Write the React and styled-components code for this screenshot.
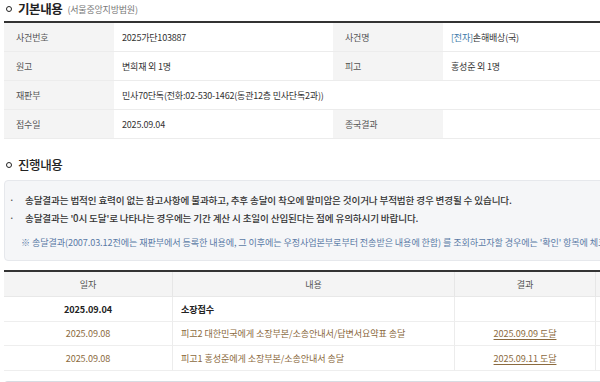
import React from "react";
import styled, { createGlobalStyle } from "styled-components";

const GlobalStyle = createGlobalStyle`
  html, body {
    margin: 0;
    padding: 0;
    width: 600px;
    height: 382px;
    overflow: hidden;
    background: #fff;
  }
  body {
    font-family: "Noto Sans CJK KR", "Noto Sans", sans-serif;
    color: #333;
  }
`;

const Page = styled.div`
  margin-left: 4px;
  width: 658px;
`;

const Title = styled.div`
  display: flex;
  align-items: center;
  height: 17px;
  margin-top: ${(p) => p.$top || 0}px;
  margin-bottom: ${(p) => p.$bottom || 4}px;
  white-space: nowrap;
`;

const Ring = styled.span`
  width: 4px;
  height: 4px;
  border: 1.6px solid #222;
  border-radius: 50%;
  margin-left: 2px;
  margin-right: 6px;
`;

const TitleText = styled.span`
  font-size: 12.5px;
  font-weight: ${(p) => p.$weight || 700};
  color: #222;
  letter-spacing: -0.4px;
`;

const Court = styled.span`
  font-size: 9px;
  color: #777;
  margin-left: 5px;
  margin-top: 2px;
  letter-spacing: -0.2px;
`;

const InfoGrid = styled.div`
  display: grid;
  grid-template-columns: 110px 219px 110px 1fr;
  border-top: 2px solid #333;
  font-size: 9px;
  letter-spacing: -0.2px;
`;

const Cell = styled.div`
  height: 28px;
  display: flex;
  align-items: center;
  border-bottom: 1px solid #ececec;
  white-space: nowrap;
  grid-column: ${(p) => (p.$span ? `span ${p.$span}` : "auto")};
`;

const Label = styled(Cell)`
  background: #f4f4f4;
  color: #555;
  padding-left: 12px;
`;

const Value = styled(Cell)`
  color: #333;
  padding-left: 8px;
`;

const Tag = styled.span`
  color: #3b78a8;
`;

const Notice = styled.div`
  background: #f5f6f8;
  border: 1px solid #e6e8ec;
  border-radius: 4px;
  padding: 10px 0 11px 0;
  white-space: nowrap;
  overflow: hidden;
`;

const Bullet = styled.div`
  display: flex;
  height: 18px;
  align-items: center;
  font-size: 9.6px;
  font-weight: 500;
  color: #333;
  letter-spacing: -0.15px;
`;

const Dot = styled.span`
  width: 20px;
  padding-left: 4px;
  box-sizing: border-box;
  color: #555;
`;

const Note = styled.div`
  height: 14px;
  line-height: 14px;
  margin-top: 8px;
  padding-left: 16px;
  font-size: 9.1px;
  color: #5a7aa6;
  letter-spacing: -0.1px;
`;

const History = styled.div`
  margin-top: 9px;
  border-top: 2px solid #333;
  display: grid;
  grid-template-columns: 168px 282px 141px 1fr;
  font-size: 9.1px;
  letter-spacing: -0.1px;
`;

const HCell = styled.div`
  height: 24px;
  display: flex;
  align-items: center;
  justify-content: center;
  background: #f4f4f4;
  color: #555;
  border-bottom: 1px solid #e8e8e8;
  border-left: ${(p) => (p.$first ? "none" : "1px solid #e6e6e6")};
`;

const RCell = styled.div`
  height: 23.5px;
  display: flex;
  align-items: center;
  justify-content: ${(p) => (p.$left ? "flex-start" : "center")};
  padding-left: ${(p) => (p.$left ? "8px" : "0")};
  border-bottom: 1px solid #eeeeee;
  border-left: ${(p) => (p.$first ? "none" : "1px solid #ececec")};
  color: ${(p) => (p.$brown ? "#8b6a3e" : "#222")};
  font-weight: ${(p) => (p.$strong ? 600 : 400)};
  white-space: nowrap;
`;

const Link = styled.span`
  text-decoration: underline;
  text-underline-offset: 2px;
  color: #8b6a3e;
`;

const NextBox = styled.div`
  margin-top: 10px;
  height: 30px;
  background: #f5f6f8;
  border: 1px solid #dcdfe5;
  border-top: 3px solid #d8dbe2;
  border-radius: 4px;
`;

const rows = [
  { date: "2025.09.04", text: "소장접수", result: "", brown: false },
  { date: "2025.09.08", text: "피고2 대한민국에게 소장부본/소송안내서/답변서요약표 송달", result: "2025.09.09 도달", brown: true },
  { date: "2025.09.08", text: "피고1 홍성준에게 소장부본/소송안내서 송달", result: "2025.09.11 도달", brown: true },
];

export default function App() {
  return (
    <Page>
      <GlobalStyle />
      <Title>
        <Ring />
        <TitleText>기본내용</TitleText>
        <Court>(서울중앙지방법원)</Court>
      </Title>
      <InfoGrid>
        <Label>사건번호</Label>
        <Value>2025가단103887</Value>
        <Label>사건명</Label>
        <Value><Tag>[전자]</Tag>손해배상(국)</Value>

        <Label>원고</Label>
        <Value>변희재 외 1명</Value>
        <Label>피고</Label>
        <Value>홍성준 외 1명</Value>

        <Label>재판부</Label>
        <Value $span={3}>민사70단독(전화:02-530-1462(동관12층 민사단독2과))</Value>

        <Label>접수일</Label>
        <Value>2025.09.04</Value>
        <Label>종국결과</Label>
        <Value></Value>
      </InfoGrid>

      <Title $top={17} $bottom={7}>
        <Ring />
        <TitleText $weight={500}>진행내용</TitleText>
      </Title>
      <Notice>
        <Bullet><Dot>·</Dot>송달결과는 법적인 효력이 없는 참고사항에 불과하고, 추후 송달이 착오에 말미암은 것이거나 부적법한 경우 변경될 수 있습니다.</Bullet>
        <Bullet><Dot>·</Dot>송달결과는 '0시 도달'로 나타나는 경우에는 기간 계산 시 초일이 산입된다는 점에 유의하시기 바랍니다.</Bullet>
        <Note>※ 송달결과(2007.03.12전에는 재판부에서 등록한 내용에, 그 이후에는 우정사업본부로부터 전송받은 내용에 한함) 를 조회하고자할 경우에는 '확인' 항목에 체크하시기 바랍니다.</Note>
      </Notice>

      <History>
        <HCell $first>일자</HCell>
        <HCell>내용</HCell>
        <HCell>결과</HCell>
        <HCell>확인</HCell>
        {rows.map((r, i) => (
          <React.Fragment key={i}>
            <RCell $first $brown={r.brown} $strong={!r.brown}>{r.date}</RCell>
            <RCell $left $brown={r.brown} $strong={!r.brown}>{r.text}</RCell>
            <RCell>{r.result && <Link>{r.result}</Link>}</RCell>
            <RCell></RCell>
          </React.Fragment>
        ))}
      </History>
      <NextBox />
    </Page>
  );
}
